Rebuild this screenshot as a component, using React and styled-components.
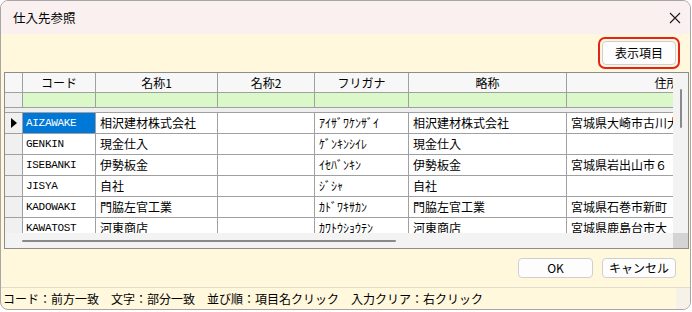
import React from "react";
import styled, { createGlobalStyle } from "styled-components";

const GlobalStyle = createGlobalStyle`
  html, body {
    margin: 0;
    padding: 0;
    background: #ffffff;
  }
  body {
    font-family: "Noto Sans CJK JP", "Noto Sans", sans-serif;
    color: #000;
  }
`;

// column widths of the grid (row header first)
const COLS = "18px 73px 122px 97px 94px 158px 200px";

const Window = styled.div`
  box-sizing: border-box;
  width: 691px;
  height: 310px;
  border: 1px solid #a6a6a6;
  border-radius: 8px;
  overflow: hidden;
  display: flex;
  flex-direction: column;
  background: #fff8dc;
`;

const TitleBar = styled.div`
  height: 33px;
  flex: none;
  display: flex;
  align-items: center;
  justify-content: space-between;
  padding: 0 9px 0 12px;
  background: #f9f0ef;
  font-size: 12.5px;
`;

const CloseButton = styled.span`
  display: flex;
  width: 12px;
  height: 12px;
`;

const Toolbar = styled.div`
  height: 38px;
  flex: none;
  box-sizing: border-box;
  display: flex;
  justify-content: flex-end;
  align-items: flex-start;
  padding: 3px 10px 0 0;
`;

const Highlight = styled.div`
  box-sizing: border-box;
  height: 32px;
  padding: 2px;
  border: 2px solid #e5231b;
  border-radius: 7px;
  display: flex;
`;

const Button = styled.button`
  box-sizing: border-box;
  width: ${(p) => p.$w || 74}px;
  height: ${(p) => p.$h || 20}px;
  padding: 0;
  border: 1px solid #cfcfcf;
  border-radius: 4px;
  background: #fdfdfd;
  font-family: "Noto Sans CJK JP", sans-serif;
  font-size: 12px;
  line-height: 1;
  color: #000;
`;

const GridFrame = styled.div`
  box-sizing: border-box;
  height: 177px;
  margin: 0 1px 0 3px;
  flex: none;
  border: 1px solid #8c8c8c;
  display: grid;
  grid-template-columns: 1fr 15px;
  grid-template-rows: 1fr 15px;
  background: #ffffff;
`;

const Viewport = styled.div`
  overflow: hidden;
`;

const Row = styled.div`
  display: grid;
  grid-template-columns: ${COLS};
  width: max-content;
  height: ${(p) => p.$h}px;
`;

const Cell = styled.div`
  box-sizing: border-box;
  border-right: 1px solid #a0a0a0;
  border-bottom: 1px solid #a0a0a0;
  overflow: hidden;
  white-space: nowrap;
  font-size: 12px;
  line-height: ${(p) => p.$h - 1}px;
  padding: 0 3px;
`;

const HeadCell = styled(Cell)`
  background: #f7f7f7;
  text-align: center;
`;

const FilterCell = styled(Cell)`
  background: ${(p) => (p.$side ? "#f0f0f0" : "#daf8c8")};
`;

const Spacer = styled.div`
  box-sizing: border-box;
  width: 900px;
  height: 5px;
  background: #eeeeee;
  border-bottom: 1px solid #a0a0a0;
`;

const SideCell = styled(Cell)`
  background: #f0f0f0;
  padding: 0;
  display: flex;
  align-items: center;
  justify-content: center;
`;

const DataCell = styled(Cell)`
  padding-left: 4px;
  background: ${(p) => (p.$selected ? "#0078d7" : "#ffffff")};
  color: ${(p) => (p.$selected ? "#ffffff" : "#000000")};
`;

const CodeCell = styled(DataCell)`
  font-family: "Liberation Mono", monospace;
  font-size: 11px;
  letter-spacing: -0.3px;
  padding-left: 3px;
`;

const Arrow = styled.span`
  width: 0;
  height: 0;
  border-top: 5px solid transparent;
  border-bottom: 5px solid transparent;
  border-left: 6px solid #000;
  margin-left: 1px;
`;

const VScroll = styled.div`
  background: #f3f3f3;
  display: flex;
  justify-content: center;
  padding-top: 16px;
`;

const VThumb = styled.div`
  width: 2px;
  height: 39px;
  border-radius: 1px;
  background: #8a8a8a;
`;

const HScroll = styled.div`
  background: #f3f3f3;
  display: flex;
  align-items: center;
  padding-left: 17px;
`;

const HThumb = styled.div`
  width: 374px;
  height: 2px;
  border-radius: 1px;
  background: #8a8a8a;
`;

const Corner = styled.div`
  background: #d4d4d4;
`;

const Footer = styled.div`
  height: 38px;
  flex: none;
  box-sizing: border-box;
  display: flex;
  justify-content: flex-end;
  align-items: flex-start;
  gap: 9px;
  padding: 9px 14px 0 0;
`;

const StatusBar = styled.div`
  flex: 1;
  display: flex;
  border-top: 1px solid #e2dccb;
`;

const StatusText = styled.div`
  flex: 1;
  display: flex;
  align-items: center;
  padding-left: 2px;
  font-size: 12px;
  white-space: pre;
`;

const Grip = styled.div`
  width: 14px;
  background: #f6f2e8;
`;

const columns = ["", "コード", "名称1", "名称2", "フリガナ", "略称", "住所"];

const rows = [
  ["AIZAWAKE", "相沢建材株式会社", "", "ｱｲｻﾞﾜｹﾝｻﾞｲ", "相沢建材株式会社", "宮城県大崎市古川大"],
  ["GENKIN", "現金仕入", "", "ｹﾞﾝｷﾝｼｲﾚ", "現金仕入", ""],
  ["ISEBANKI", "伊勢板金", "", "ｲｾﾊﾞﾝｷﾝ", "伊勢板金", "宮城県岩出山市６"],
  ["JISYA", "自社", "", "ｼﾞｼｬ", "自社", ""],
  ["KADOWAKI", "門脇左官工業", "", "ｶﾄﾞﾜｷｻｶﾝ", "門脇左官工業", "宮城県石巻市新町"],
  ["KAWATOST", "河東商店", "", "ｶﾜﾄｳｼｮｳﾃﾝ", "河東商店", "宮城県鹿島台市大"],
];

function App() {
  return (
    <>
      <GlobalStyle />
      <Window>
        <TitleBar>
          <span>仕入先参照</span>
          <CloseButton>
            <svg width="12" height="12" viewBox="0 0 12 12">
              <path d="M1 1 L11 11 M11 1 L1 11" stroke="#1a1a1a" strokeWidth="1.1" fill="none" />
            </svg>
          </CloseButton>
        </TitleBar>

        <Toolbar>
          <Highlight>
            <Button $w={74} $h={24}>表示項目</Button>
          </Highlight>
        </Toolbar>

        <GridFrame>
          <Viewport>
            <Row $h={20}>
              {columns.map((c, i) => (
                <HeadCell key={i} $h={20}>{c}</HeadCell>
              ))}
            </Row>
            <Row $h={15}>
              {columns.map((c, i) => (
                <FilterCell key={i} $h={15} $side={i === 0} />
              ))}
            </Row>
            <Spacer />
            {rows.map((r, ri) => (
              <Row key={r[0]} $h={21}>
                <SideCell $h={21}>{ri === 0 && <Arrow />}</SideCell>
                <CodeCell $h={21} $selected={ri === 0}>{r[0]}</CodeCell>
                {r.slice(1).map((v, ci) => (
                  <DataCell key={ci} $h={21}>{v}</DataCell>
                ))}
              </Row>
            ))}
          </Viewport>
          <VScroll>
            <VThumb />
          </VScroll>
          <HScroll>
            <HThumb />
          </HScroll>
          <Corner />
        </GridFrame>

        <Footer>
          <Button $w={75}>OK</Button>
          <Button $w={74}>キャンセル</Button>
        </Footer>

        <StatusBar>
          <StatusText>コード：前方一致　文字：部分一致　並び順：項目名クリック　入力クリア：右クリック</StatusText>
          <Grip />
        </StatusBar>
      </Window>
    </>
  );
}

export default App;
